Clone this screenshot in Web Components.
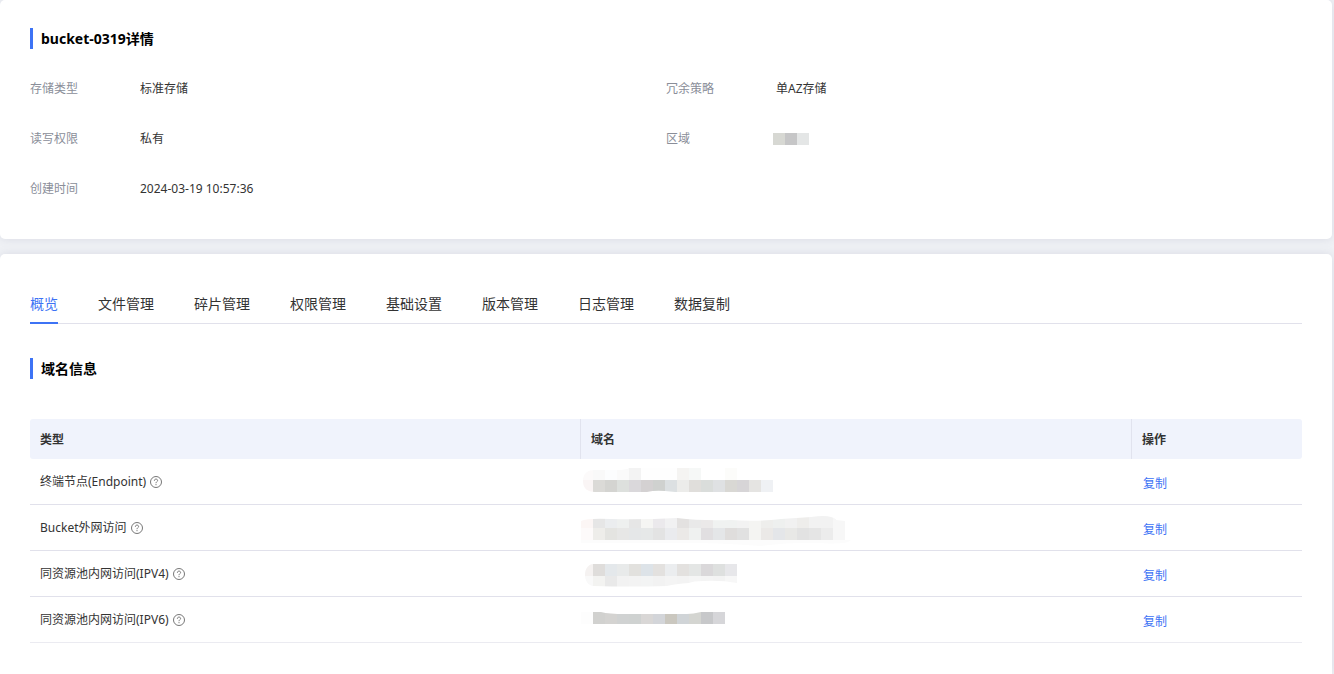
<!DOCTYPE html>
<html lang="zh-CN">
<head>
<meta charset="utf-8">
<title>bucket-0319详情</title>
<style>
  html, body { margin: 0; }
  body {
    background: #eff1f5;
    color: #333;
    font: 12px/20px "Noto Sans", "Noto Sans CJK SC", sans-serif;
  }
</style>
</head>
<body>
<bucket-page></bucket-page>

<script>
const define = (name, html, setup) => {
  const template = document.createElement('template');
  template.innerHTML = html;
  customElements.define(name, class extends HTMLElement {
    constructor() {
      super();
      this.attachShadow({ mode: 'open' }).append(template.content.cloneNode(true));
    }
    connectedCallback() {
      if (setup) setup(this, this.shadowRoot);
    }
  });
};

define('panel-card', `
  <style>
    :host { display: block; box-sizing: border-box; background: #fff; border-radius: 5px;
      box-shadow: 0 0 10px rgba(90, 90, 130, .14); }
  </style>
  <slot></slot>`);

define('section-title', `
  <style>
    :host { display: block; }
    h2 { margin: 0; padding-left: 8px; border-left: 3px solid #3d73f5;
      color: #000; font-size: 14px; line-height: 21px; font-weight: 700; }
  </style>
  <h2><slot></slot></h2>`);

define('detail-item', `
  <style>
    :host { display: flex; align-items: center; height: 50px; }
    .label { flex: none; width: 110px; color: #8a8e99; }
  </style>
  <span class="label"><slot name="label"></slot></span>
  <span><slot></slot></span>`);

define('tab-bar', `
  <style>
    :host { display: flex; gap: 40px; height: 40px;
      background: linear-gradient(#e1e1eb, #e1e1eb) bottom / 100% 1px no-repeat; }
  </style>
  <slot></slot>`, host => {
    host.setAttribute('role', 'tablist');
    host.addEventListener('click', e => {
      const tab = e.target.closest('tab-item');
      if (!tab) return;
      host.querySelectorAll('tab-item').forEach(t => t.toggleAttribute('active', t === tab));
    });
  });

define('tab-item', `
  <style>
    :host { display: block; }
    button { box-sizing: border-box; height: 40px; padding: 2px 0 0; border: 0;
      border-bottom: 2px solid transparent; background: none; color: #333;
      font: inherit; font-size: 14px; cursor: pointer; white-space: nowrap; }
    :host([active]) button { color: #3d73f5; border-bottom-color: #3d73f5; }
  </style>
  <button type="button" role="tab"><slot></slot></button>`);

define('help-icon', `
  <style>
    :host { display: block; width: 12px; height: 12px; }
    svg { display: block; }
  </style>
  <svg width="12" height="12" viewBox="0 0 12 12" fill="none" stroke="#777" role="img" aria-label="帮助">
    <circle cx="6" cy="6" r="5.5"/>
    <path d="M4.4 4.8C4.4 3.7 5 3.1 6 3.1S7.6 3.7 7.6 4.6C7.6 5.6 6 5.8 6 7.2"/>
    <path d="M6 8.1V9.2"/>
  </svg>`);

/* Region value hidden behind grey blocks */
define('masked-region', `
  <style>
    :host { display: block; margin-left: -3px; }
    svg { display: block; }
  </style>
  <svg width="36" height="12" aria-hidden="true">
    <path fill="#d7d8d3" d="M0 0h12v12H0z"/>
    <path fill="#c6c6c7" d="M12 0h12v12H12z"/>
    <path fill="#e4e6e6" d="M24 0h12v12H24z"/>
  </svg>`);

/* Domain values hidden behind a mosaic; each strip is x, y, height and its 12px block colours */
const masks = {
  endpoint: {
    outline: 'M2 22C2 14 7 11 14 11H34Q46 11 48 9H192V33H120Q98 34 84 32Q74 31 66 33H14C6 33 2 29 2 22Z',
    strips: [
      [0, 9, 12, 'fcfafa f9f9f9 fcfdfe fafafa f3f3f3 fefefe fefefe fefefe f5f4f2 f6f8f7 ffffff ffffff fcfcfa'],
      [0, 21, 12, 'faf5f5 dbdad7 d4d4d1 dde0dd dad8db d4d1d2 cfd1cf dce0e2 ececea e0dedb dadddb dfe1e3 d9d8d4 d7d5d7 e5e4e2 eff1f4']
    ]
  },
  external: {
    outline: 'M0 16Q6 13 30 14Q60 15 96 13Q120 16 150 15Q174 17 200 14Q216 13 230 12Q244 10 250 12Q256 14 255 15L264 16V35H270Q266 40 240 38Q210 37 180 41Q120 37 90 38H0Z',
    strips: [
      [0, 8, 15, 'fcf6f5 e6e6e6 ebedef eef0ef e6e6e6 f5f5f3 ebe9ec f1f1f2 e3e1e0 e9e9e9 ebe9e9 f0f2f1 f0f2f1 f2f2f2 f4f4f2 eeeeec eef0ef f1f1f1 eeedeb f2f2f2 f2f2f2 f7f7f7'],
      [0, 23, 12, 'fdfafa eeedea e4e4e1 e7e7e6 e5e7e8 e6e8e8 e3e3e3 eaebee ebe9e7 eff1f0 e1dfe1 e4e6e8 dfdddc e1e1e1 f4f4f2 ebe9e7 e4e6e9 e8e8e6 e2e2e2 e5e5e5 ececec f7f7f7'],
      [0, 35, 6, 'fcfcfc fcfcfc fcfcfc fcfcfc fcfcfc fcfcfc fcfcfc fcfcfc fcfcfc fcfcfc fcfcfc fcfcfc fcfcfc fcfcfc fcfcfc fcfcfc fcfcfc fcfcfc fcfcfc fcfcfc fcfcfc fcfcfc fcfcfc']
    ]
  },
  ipv4: {
    outline: 'M4 24C4 17 8 13 12 13H156V32Q140 29 122 30Q112 30 108 32Q94 33 86 35Q50 36 12 35C7 34 4 30 4 24Z',
    strips: [
      [0, 13, 12, 'f5f2f1 dfdddb e4e8eb e8eaea e2e1de dde3e8 e3e1df ebedef e3e1df e4e6e5 dad8da dee0df e7e7ea'],
      [0, 25, 12, 'f9f9f9 f3f3f1 e9e9e9 f2f2f2 f3f3f3 f3f4f4 f2f2f2 f4f4f4 f3f3f3 f5f5f5 f4f4f4 f3f3f3 f7f7f7']
    ]
  },
  ipv6: {
    outline: 'M0 15H20Q28 17 44 17H106Q112 17 120 15H144V27H0Z',
    strips: [
      [0, 15, 12, 'fdfdfd d1d1cf d4d3d1 d0d2d2 cfd2d1 d9d7d6 d3d5d9 cac7bf d0d4d7 d4d5d1 c7c8ca d6d6d9']
    ]
  }
};

define('masked-domain', `
  <style>
    :host { display: block; overflow: hidden; }
    svg { display: block; }
  </style>
  <svg width="280" height="45" shape-rendering="crispEdges" aria-hidden="true">
    <defs><clipPath id="outline"><path/></clipPath></defs>
    <g clip-path="url(#outline)"></g>
  </svg>`, (host, root) => {
    const mask = masks[host.getAttribute('kind')];
    root.querySelector('clipPath path').setAttribute('d', mask.outline);
    const group = root.querySelector('g');
    for (const [x, y, height, colours] of mask.strips) {
      colours.split(' ').forEach((colour, i) => {
        const rect = document.createElementNS('http://www.w3.org/2000/svg', 'rect');
        const attrs = { x: x + i * 12, y, width: 12, height, fill: '#' + colour };
        for (const key in attrs) rect.setAttribute(key, attrs[key]);
        group.append(rect);
      });
    }
  });

define('copy-button', `
  <style>
    :host { display: block; padding-top: 4px; }
    button { padding: 0 1px; border: 0; background: none; color: #3d73f5;
      font: inherit; cursor: pointer; display: block; }
  </style>
  <button type="button"><slot></slot></button>`);

define('domain-table', `
  <style>
    :host { display: block; }
    table { width: 100%; table-layout: fixed; border-collapse: separate; border-spacing: 0; }
    .action { width: 170px; }
    th { box-sizing: border-box; height: 40px; padding: 2px 10px 0; background: #f0f3fc;
      text-align: left; font-weight: 700; }
    th:not(:last-child) { border-right: 1px solid #e1e3ee; }
    th:first-child { border-radius: 3px 0 0 3px; }
    th:last-child { border-radius: 0 3px 3px 0; }
    td { box-sizing: border-box; height: 46px; padding: 0 10px; border-bottom: 1px solid #e1e1eb; }
    td.domain { padding: 0; }
    tr:last-child td { border-bottom-color: #ebebf1; }
    .type { display: flex; align-items: center; gap: 4px; }
  </style>
  <table>
    <thead>
      <tr><th scope="col">类型</th><th scope="col">域名</th><th scope="col" class="action">操作</th></tr>
    </thead>
    <tbody>
      <tr>
        <td><div class="type"><span>终端节点(Endpoint)</span><help-icon></help-icon></div></td>
        <td class="domain"><masked-domain kind="endpoint"></masked-domain></td>
        <td><copy-button>复制</copy-button></td>
      </tr>
      <tr>
        <td><div class="type"><span>Bucket外网访问</span><help-icon></help-icon></div></td>
        <td class="domain"><masked-domain kind="external"></masked-domain></td>
        <td><copy-button>复制</copy-button></td>
      </tr>
      <tr>
        <td><div class="type"><span>同资源池内网访问(IPV4)</span><help-icon></help-icon></div></td>
        <td class="domain"><masked-domain kind="ipv4"></masked-domain></td>
        <td><copy-button>复制</copy-button></td>
      </tr>
      <tr>
        <td><div class="type"><span>同资源池内网访问(IPV6)</span><help-icon></help-icon></div></td>
        <td class="domain"><masked-domain kind="ipv6"></masked-domain></td>
        <td><copy-button>复制</copy-button></td>
      </tr>
    </tbody>
  </table>`);

define('bucket-page', `
  <style>
    :host { display: flex; flex-direction: column; gap: 15px; box-sizing: border-box;
      min-height: 100vh; padding-right: 2px; }
    .summary { padding: 28px 30px 25px; }
    .details { display: grid; grid-template-columns: 1fr 1fr; margin-top: 15px; }
    .content { flex: 1; padding: 30px 30px 20px; border-radius: 5px 5px 0 0; }
    .content section-title { margin: 34px 0 40px; }
  </style>
  <panel-card class="summary">
    <section-title>bucket-0319详情</section-title>
    <div class="details">
      <detail-item><span slot="label">存储类型</span>标准存储</detail-item>
      <detail-item><span slot="label">冗余策略</span>单AZ存储</detail-item>
      <detail-item><span slot="label">读写权限</span>私有</detail-item>
      <detail-item><span slot="label">区域</span><masked-region></masked-region></detail-item>
      <detail-item><span slot="label">创建时间</span>2024-03-19 10:57:36</detail-item>
    </div>
  </panel-card>
  <panel-card class="content">
    <tab-bar>
      <tab-item active>概览</tab-item>
      <tab-item>文件管理</tab-item>
      <tab-item>碎片管理</tab-item>
      <tab-item>权限管理</tab-item>
      <tab-item>基础设置</tab-item>
      <tab-item>版本管理</tab-item>
      <tab-item>日志管理</tab-item>
      <tab-item>数据复制</tab-item>
    </tab-bar>
    <section-title>域名信息</section-title>
    <domain-table></domain-table>
  </panel-card>`);
</script>
</body>
</html>
